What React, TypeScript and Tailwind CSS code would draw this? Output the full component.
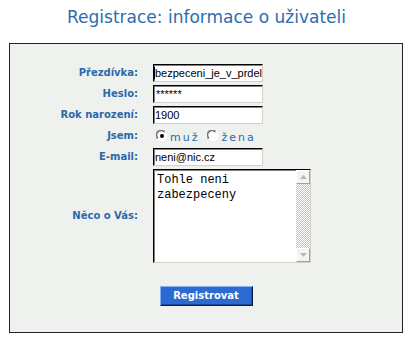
import React from 'react';

const field =
  "h-[18px] bg-white border border-t-black border-l-black border-r-[#d4d0c8] border-b-[#d4d0c8] shadow-[inset_1px_1px_0_#808080] font-['Liberation_Sans',Arial,sans-serif] text-[11px] leading-[16px] text-black overflow-hidden whitespace-nowrap";

const Label = ({ children }: { children: React.ReactNode }) => (
  <div className="text-right text-[10px] font-bold text-[#2b69a9] leading-[14px]">{children}</div>
);

const Radio = ({ checked }: { checked?: boolean }) => (
  <svg width="12" height="12" viewBox="0 0 12 12" className="shrink-0">
    <circle cx="6" cy="6" r="5.5" fill="#fff" />
    <path d="M1.2 9 A5.5 5.5 0 0 1 9 1.2" fill="none" stroke="#808080" strokeWidth="1" />
    <path d="M2 8.3 A4.4 4.4 0 0 1 8.3 2" fill="none" stroke="#404040" strokeWidth="1" />
    <path d="M10.8 3 A5.5 5.5 0 0 1 3 10.8" fill="none" stroke="#e8e8e8" strokeWidth="1" />
    {checked && <circle cx="6" cy="6" r="2" fill="#000" />}
  </svg>
);

const ScrollBtn = ({ up }: { up?: boolean }) => (
  <div className="h-[14px] w-[14px] bg-[#f4f4f0] border border-t-white border-l-white border-r-[#a0a0a0] border-b-[#a0a0a0] flex items-center justify-center">
    <svg width="7" height="4" viewBox="0 0 7 4">
      <path d={up ? 'M0 4 L3.5 0 L7 4 Z' : 'M0 0 L3.5 4 L7 0 Z'} fill="#b8b8b8" />
    </svg>
  </div>
);

export default function App() {
  return (
    <div className="w-[413px] h-[343px] bg-white font-['DejaVu_Sans',Verdana,sans-serif]">
      <h1 className="pt-[7px] h-[43px] text-center text-[17px] leading-[20px] font-normal text-[#2a6db0]">
        Registrace: informace o uživateli
      </h1>
      <div className="ml-[9px] w-[394px] h-[290px] border border-[#222] bg-[#eff1ee] pt-[20px]">
        <div className="grid grid-cols-[128px_auto] gap-x-[15px] gap-y-[3px] items-center">
          <Label>Přezdívka:</Label>
          <div className={`${field} w-[110px]`}>
            <span className="border-l border-black">bezpeceni_je_v_prdeli</span>
          </div>

          <Label>Heslo:</Label>
          <div className={`${field} w-[110px] pl-[2px] text-[9px] leading-[12px]`}>******</div>

          <Label>Rok narození:</Label>
          <div className={`${field} w-[110px] pl-[1px]`}>1900</div>

          <Label>Jsem:</Label>
          <div className="h-[18px] flex items-center text-[11px] text-[#2b69a9] tracking-[2px]">
            <span className="ml-[3px]"><Radio checked /></span>
            <span className="ml-[2px] mt-[4px]">muž</span>
            <span className="ml-[8px]"><Radio /></span>
            <span className="ml-[2px] mt-[4px]">žena</span>
          </div>

          <Label>E-mail:</Label>
          <div className={`${field} w-[110px] pl-[1px]`}>neni@nic.cz</div>

          <Label>Něco o Vás:</Label>
          <div className="h-[94px] w-[158px] flex bg-white border border-t-black border-l-black border-r-[#d4d0c8] border-b-[#d4d0c8] shadow-[inset_1px_1px_0_#808080]">
            <div className="flex-1 pl-[3px] pt-[3px] font-['Liberation_Mono','Courier_New',monospace] text-[12px] leading-[15px] text-black">
              Tohle neni
              <br />
              zabezpeceny
            </div>
            <div className="w-[14px] flex flex-col bg-[repeating-conic-gradient(#c4c4c4_0_25%,#ffffff_0_50%)] bg-[length:2px_2px]">
              <ScrollBtn up />
              <div className="flex-1" />
              <ScrollBtn />
            </div>
          </div>
        </div>
        <div className="flex justify-center mt-[23px]">
          <button className="w-[93px] h-[20px] bg-[#2a6ad2] border border-t-[#86aef0] border-l-[#86aef0] border-r-[#0a1d4a] border-b-[#0a1d4a] shadow-[inset_-1px_-1px_0_#1d4a9a] text-white text-[10px] font-bold leading-[16px]">
            Registrovat
          </button>
        </div>
      </div>
    </div>
  );
}
